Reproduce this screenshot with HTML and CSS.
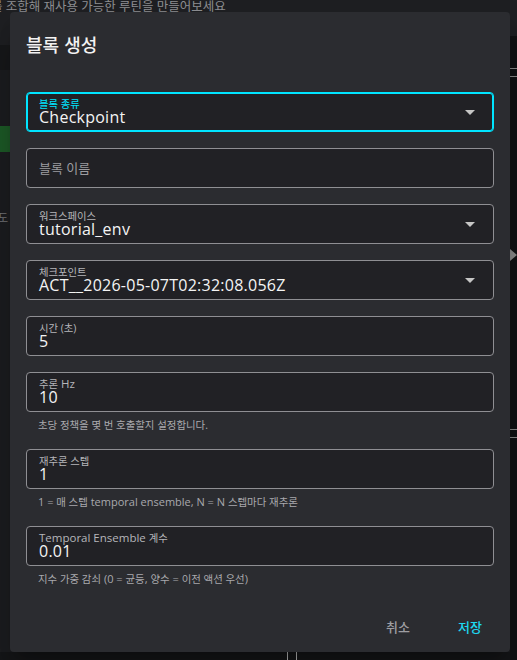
FILE: index.html
```html
<!DOCTYPE html>
<html lang="ko">
<head>
    <meta charset="UTF-8">
    <title>블록 생성</title>
    <link rel="stylesheet" href="styles.css">
</head>
<body>
<div class="page">
    <div class="app">
        <div class="topbar"><p class="intro">를 조합해 재사용 가능한 루틴을 만들어보세요</p></div>
        <div class="tabs"></div>
        <div class="workspace">
            <div class="run-bar"></div>
            <p class="side-label">도</p>
        </div>
        <div class="statusbar"><span class="tick"></span><span class="tick"></span></div>
    </div>
    <div class="rail">
        <div class="rail-top"></div>
        <div class="rail-lines first"></div>
        <span class="rail-arrow"></span>
        <div class="rail-lines second"></div>
    </div>
</div>

<div class="dialog" role="dialog">
    <h2 class="dialog-title">블록 생성</h2>
    <div class="dialog-content">
        <div class="field-group">
            <div class="field focused">
                <div class="field-body">
                    <label class="field-label"><span class="ko">블록 종류</span></label>
                    <div class="field-value">Checkpoint</div>
                </div>
                <svg class="caret" viewBox="0 0 10 5" width="10" height="5"><path d="M0 0h10L5 5z"/></svg>
            </div>
        </div>
        <div class="field-group">
            <div class="field">
                <div class="field-body">
                    <div class="placeholder">블록 이름</div>
                </div>
            </div>
        </div>
        <div class="field-group">
            <div class="field">
                <div class="field-body">
                    <label class="field-label"><span class="ko">워크스페이스</span></label>
                    <div class="field-value">tutorial_env</div>
                </div>
                <svg class="caret" viewBox="0 0 10 5" width="10" height="5"><path d="M0 0h10L5 5z"/></svg>
            </div>
        </div>
        <div class="field-group">
            <div class="field">
                <div class="field-body">
                    <label class="field-label"><span class="ko">체크포인트</span></label>
                    <div class="field-value">ACT__2026-05-07T02:32:08.056Z</div>
                </div>
                <svg class="caret" viewBox="0 0 10 5" width="10" height="5"><path d="M0 0h10L5 5z"/></svg>
            </div>
        </div>
        <div class="field-group">
            <div class="field">
                <div class="field-body">
                    <label class="field-label"><span class="ko">시간 (초)</span></label>
                    <div class="field-value">5</div>
                </div>
            </div>
        </div>
        <div class="field-group">
            <div class="field">
                <div class="field-body">
                    <label class="field-label"><span class="ko">추론</span> Hz</label>
                    <div class="field-value">10</div>
                </div>
            </div>
            <p class="helper"><span class="ko">초당 정책을 몇 번 호출할지 설정합니다.</span></p>
        </div>
        <div class="field-group">
            <div class="field">
                <div class="field-body">
                    <label class="field-label"><span class="ko">재추론 스텝</span></label>
                    <div class="field-value">1</div>
                </div>
            </div>
            <p class="helper">1 = <span class="ko">매 스텝</span> temporal ensemble, N = N <span class="ko">스텝마다 재추론</span></p>
        </div>
        <div class="field-group">
            <div class="field">
                <div class="field-body">
                    <label class="field-label">Temporal Ensemble <span class="ko">계수</span></label>
                    <div class="field-value">0.01</div>
                </div>
            </div>
            <p class="helper"><span class="ko">지수 가중 감쇠</span> (0 = <span class="ko">균등</span>, <span class="ko">양수</span> = <span class="ko">이전 액션 우선</span>)</p>
        </div>
    </div>
    <div class="dialog-actions">
        <button class="btn cancel">취소</button>
        <button class="btn save">저장</button>
    </div>
</div>
</body>
</html>
```

FILE: styles.css
```css
* {
    margin: 0;
    padding: 0;
    box-sizing: border-box;
}

body {
    width: 517px;
    height: 660px;
    overflow: hidden;
    background: #1c1d20;
    font-family: "Open Sans", "Noto Sans CJK KR", sans-serif;
    color: #ececec;
}

/* background app under the dialog */
.page {
    display: flex;
    height: 660px;
}

.app {
    flex: 1;
    display: flex;
    flex-direction: column;
}

.topbar {
    height: 45px;
    background: #1e1f22;
    overflow: hidden;
}

.intro {
    margin-left: -9px;
    font-size: 12.5px;
    line-height: 13px;
    color: #8e8f93;
    white-space: nowrap;
}

.tabs {
    height: 25px;
    background: #17181a;
}

.workspace {
    flex: 1;
    padding-top: 56px;
}

.run-bar {
    width: 200px;
    height: 26px;
    background: #1d5a27;
}

.side-label {
    margin-top: 60px;
    margin-left: -2px;
    font-size: 11px;
    line-height: 12px;
    color: #77787c;
}

.statusbar {
    height: 8px;
    background: #151618;
    display: flex;
    padding-left: 287px;
    gap: 8px;
}

.tick {
    width: 1px;
    background: #bdbdbd;
}

.rail {
    width: 7px;
    background: #111214;
    display: flex;
    flex-direction: column;
    align-items: flex-start;
}

.rail-top {
    width: 100%;
    height: 36px;
    background: #1e1f22;
}

.rail-lines {
    width: 100%;
    height: 9px;
    border-top: 1px solid #8a8a8a;
    border-bottom: 1px solid #8a8a8a;
}

.rail-lines.first {
    margin-top: 32px;
}

.rail-lines.second {
    margin-top: 168px;
}

.rail-arrow {
    margin-top: 172px;
    width: 0;
    height: 0;
    border-top: 6px solid transparent;
    border-bottom: 6px solid transparent;
    border-left: 7px solid #8c8c8c;
}

/* dialog */
.dialog {
    position: absolute;
    left: 10px;
    top: 12px;
    width: 500px;
    height: 640px;
    display: flex;
    flex-direction: column;
    background: #2b2c30;
    border-radius: 4px;
    box-shadow: 0 11px 15px -7px rgba(0, 0, 0, 0.3), 0 24px 38px 3px rgba(0, 0, 0, 0.2);
}

.dialog-title {
    padding: 16px 16px 0;
    font-family: "Noto Sans CJK KR", sans-serif;
    font-size: 18px;
    font-weight: 500;
    line-height: 32px;
    color: #f2f2f2;
}

.dialog-content {
    flex: 1;
    padding: 32px 16px 0;
    display: flex;
    flex-direction: column;
    gap: 16px;
}

.field {
    height: 40px;
    display: flex;
    align-items: center;
    padding: 0 12px;
    background: #212125;
    border: 1px solid #8f8f93;
    border-radius: 4px;
}

.field.focused {
    border-color: #00e5ff;
    box-shadow: inset 0 0 0 1px #00e5ff;
}

.field-body {
    flex: 1;
    align-self: stretch;
    display: flex;
    flex-direction: column;
    justify-content: center;
    padding-top: 5px;
}

.field-body:has(.field-label) {
    justify-content: flex-start;
}

.field-label {
    display: block;
    font-size: 11.5px;
    line-height: 12px;
    color: #b6b6ba;
    white-space: nowrap;
}

.focused .field-label {
    color: #00e5ff;
}

.field-value {
    font-size: 16px;
    line-height: 14px;
    letter-spacing: 0.25px;
    color: #f4f4f4;
    white-space: nowrap;
}

.placeholder {
    margin-top: -5px;
    font-size: 13px;
    line-height: 16px;
    color: #9c9ca0;
}

.ko {
    font-size: 0.9em;
}

.caret {
    margin-right: 6px;
    fill: #c6c6c6;
}

.helper {
    margin-top: 5px;
    padding-left: 12px;
    font-size: 11px;
    line-height: 15px;
    color: #a9a9ad;
    white-space: nowrap;
}

.helper .ko {
    font-size: 0.95em;
}

.dialog-actions {
    display: flex;
    justify-content: flex-end;
    gap: 8px;
    padding: 8px;
}

.btn {
    min-width: 64px;
    height: 36px;
    padding: 6px 8px;
    border: 0;
    border-radius: 4px;
    background: transparent;
    font-family: "Noto Sans CJK KR", sans-serif;
    font-size: 13px;
    font-weight: 500;
    cursor: pointer;
}

.btn.cancel {
    color: #9e9ea2;
}

.btn.save {
    color: #1ed8f0;
}
```
